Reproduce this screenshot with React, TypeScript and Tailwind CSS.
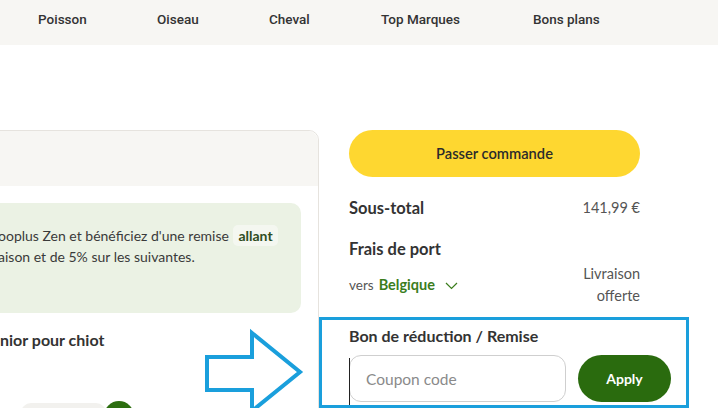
import React from 'react';

const navItems = [
  { label: 'Poisson', w: 'w-[119px]' },
  { label: 'Oiseau', w: 'w-[112px]' },
  { label: 'Cheval', w: 'w-[112px]' },
  { label: 'Top Marques', w: 'w-[152px]' },
  { label: 'Bons plans', w: 'w-[120px]' },
];

function ArrowMark() {
  return (
    <svg className="absolute left-0 top-0 pointer-events-none" width="718" height="408" viewBox="0 0 718 408">
      <polygon
        points="207,357 252,357 252,333 300,372 252,411 252,390 207,390"
        fill="white"
        stroke="#1a9fdc"
        strokeWidth="4"
        strokeLinejoin="miter"
      />
    </svg>
  );
}

export default function App() {
  return (
    <div className="relative w-[718px] h-[408px] overflow-hidden bg-white text-[#333] font-['Lato','Noto_Sans',sans-serif]">
      <nav className="h-[45px] bg-[#f7f6f3] flex items-center pb-[6px] pl-[38px] font-['Roboto',sans-serif] text-[13.5px] font-medium text-[#333]">
        {navItems.map(item => (
          <span key={item.label} className={`${item.w} shrink-0`}>{item.label}</span>
        ))}
      </nav>

      <div className="flex pt-[85px]">
        {/* cart card, cut off on the left */}
        <div className="ml-[-40px] w-[359px] shrink-0 h-[300px] border border-[#e6e3de] rounded-tr-[10px]">
          <div className="h-[55px] bg-[#f7f6f3] rounded-tr-[10px]" />
          <div className="mt-[17px] ml-[16px] mr-[17px] h-[110px] rounded-[10px] bg-[#ebf2e4] pl-[22px] pt-[22px] text-[14px] leading-[21px] text-[#3a3a3a]">
            <div className="ml-[-1px] whitespace-nowrap">
              ooplus Zen et bénéficiez d'une remise{' '}
              <span className="ml-[1px] inline-block rounded-[5px] bg-[#f4f7f0] px-[5px] font-bold text-[#2f4d22]">allant</span>
            </div>
            <div className="ml-[-1px] whitespace-nowrap">aison et de 5% sur les suivantes.</div>
          </div>
          <div className="mt-[16px] pl-[39px] text-[16px] font-bold leading-[22px] text-[#333]">nior pour chiot</div>
          <div className="mt-[52px] flex items-start pl-[60px]">
            <div className="h-[20px] w-[85px] rounded-full bg-[#f2f1ee]" />
            <div className="-ml-[2px] mt-[-2px] h-[30px] w-[30px] rounded-full bg-[#2d6e10]" />
          </div>
        </div>

        {/* summary column */}
        <div className="ml-[30px] w-[291px] shrink-0">
          <button className="h-[47px] w-full rounded-full bg-[#fed730] text-[14.7px] font-semibold text-[#2b2b2b]">
            Passer commande
          </button>
          <div className="mt-[20px] flex h-[22px] items-center justify-between">
            <span className="text-[16.5px] font-bold">Sous-total</span>
            <span className="text-[14.5px] text-[#555]">141,99 €</span>
          </div>
          <div className="mt-[19px] h-[22px] text-[16.5px] font-bold leading-[22px]">Frais de port</div>
          <div className="mt-[3px] flex items-center justify-between">
            <div className="flex items-center text-[13.5px] text-[#555]">
              <span>vers</span>
              <span className="ml-[5px] text-[14.5px] font-bold text-[#3b7d1c]">Belgique</span>
              <svg className="ml-[10px] mt-[2px]" width="13" height="8" viewBox="0 0 13 8">
                <path d="M1 1l5.5 5.5L12 1" fill="none" stroke="#3b7d1c" strokeWidth="1.2" />
              </svg>
            </div>
            <div className="text-right text-[14.5px] leading-[22px] text-[#555]">
              <div>Livraison</div>
              <div>offerte</div>
            </div>
          </div>

          <div className="mt-[10px] ml-[-30px] w-[370px] h-[91px] overflow-hidden border-[3px] border-[#1a9fdc] pl-[27px] pt-[5px]">
            <div className="h-[22px] text-[16px] font-bold leading-[22px]">Bon de réduction / Remise</div>
            <div className="mt-[8px] flex items-start">
              <div className="relative">
                <input
                  placeholder="Coupon code"
                  className="h-[47px] w-[217px] rounded-[12px] border border-[#cfcfcf] pl-[16px] text-[15.5px] text-[#333] outline-none placeholder:text-[#8a8a8a]"
                />
                <span className="absolute left-0 top-[3px] h-[60px] w-px bg-[#222]" />
              </div>
              <button className="ml-[12px] h-[47px] w-[93px] rounded-full bg-[#2a6b0e] text-[14px] font-bold text-white">
                Apply
              </button>
            </div>
          </div>
        </div>
      </div>

      <ArrowMark />
    </div>
  );
}
